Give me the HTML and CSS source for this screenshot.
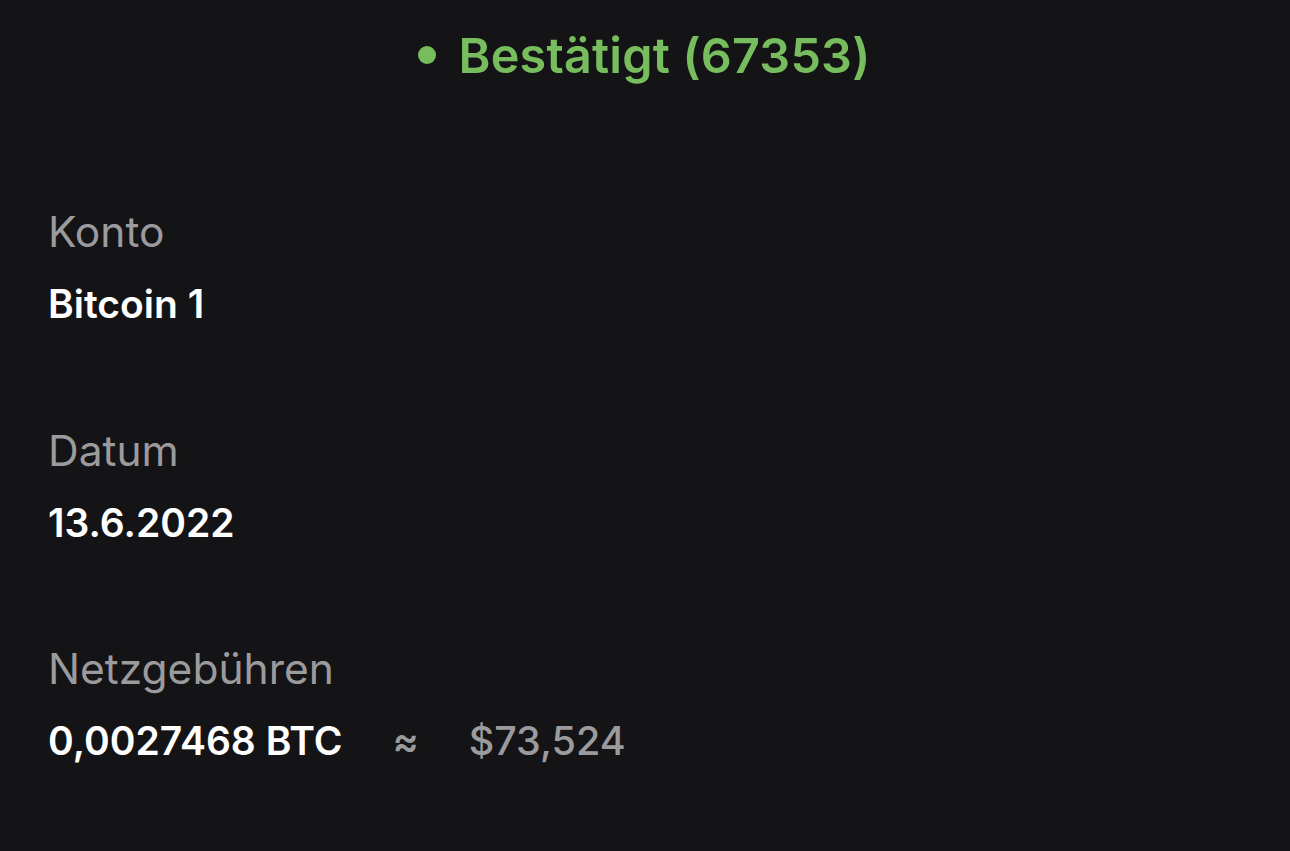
FILE: index.html
```html
<!DOCTYPE html>
<html lang="de">
<head>
<meta charset="utf-8">
<link rel="stylesheet" href="styles.css">
</head>
<body>
<main class="screen">
  <header class="status">
    <span class="status-dot"></span>
    <span class="status-text">Bestätigt (67353)</span>
  </header>
  <section class="field">
    <div class="label">Konto</div>
    <div class="value">Bitcoin 1</div>
  </section>
  <section class="field">
    <div class="label">Datum</div>
    <div class="value">13.6.2022</div>
  </section>
  <section class="field">
    <div class="label">Netzgebühren</div>
    <div class="value fee">
      <span>0,0027468 BTC</span>
      <span class="approx">≈</span>
      <span class="fiat">$73,524</span>
    </div>
  </section>
</main>
</body>
</html>
```
FILE: styles.css
```css
html, body {
  margin: 0;
  padding: 0;
  background: #141416;
  height: 100%;
}
body {
  font-family: Inter, "Noto Sans", sans-serif;
  color: #ffffff;
}
.screen {
  padding: 0 48px;
  display: flex;
  flex-direction: column;
}
.status {
  display: flex;
  align-items: center;
  justify-content: center;
  gap: 23px;
  height: 112px;
  margin-left: -48px;
  margin-right: -48px;
  padding-bottom: 2px;
  padding-right: 2px;
  box-sizing: border-box;
}
.status-dot {
  width: 18px;
  height: 18px;
  border-radius: 50%;
  background: #77bd5e;
}
.status-text {
  color: #77bd5e;
  font-size: 48.5px;
  font-weight: 600;
  letter-spacing: 0.2px;
}
.field {
  display: flex;
  flex-direction: column;
  margin-top: 93px;
}
.field:first-of-type {
  margin-top: 92px;
}
.field:last-of-type {
  margin-top: 92px;
}
.label {
  color: #9b9b9e;
  font-size: 42.5px;
  line-height: 56px;
}
.value {
  font-size: 39px;
  font-weight: 600;
  line-height: 52px;
  margin-top: 18px;
}
.fee {
  display: flex;
  align-items: baseline;
  gap: 50px;
}
.approx {
  color: #9b9b9e;
  font-size: 39px;
}
.fiat {
  color: #9b9b9e;
  font-weight: 500;
  font-size: 39.5px;
}
```
